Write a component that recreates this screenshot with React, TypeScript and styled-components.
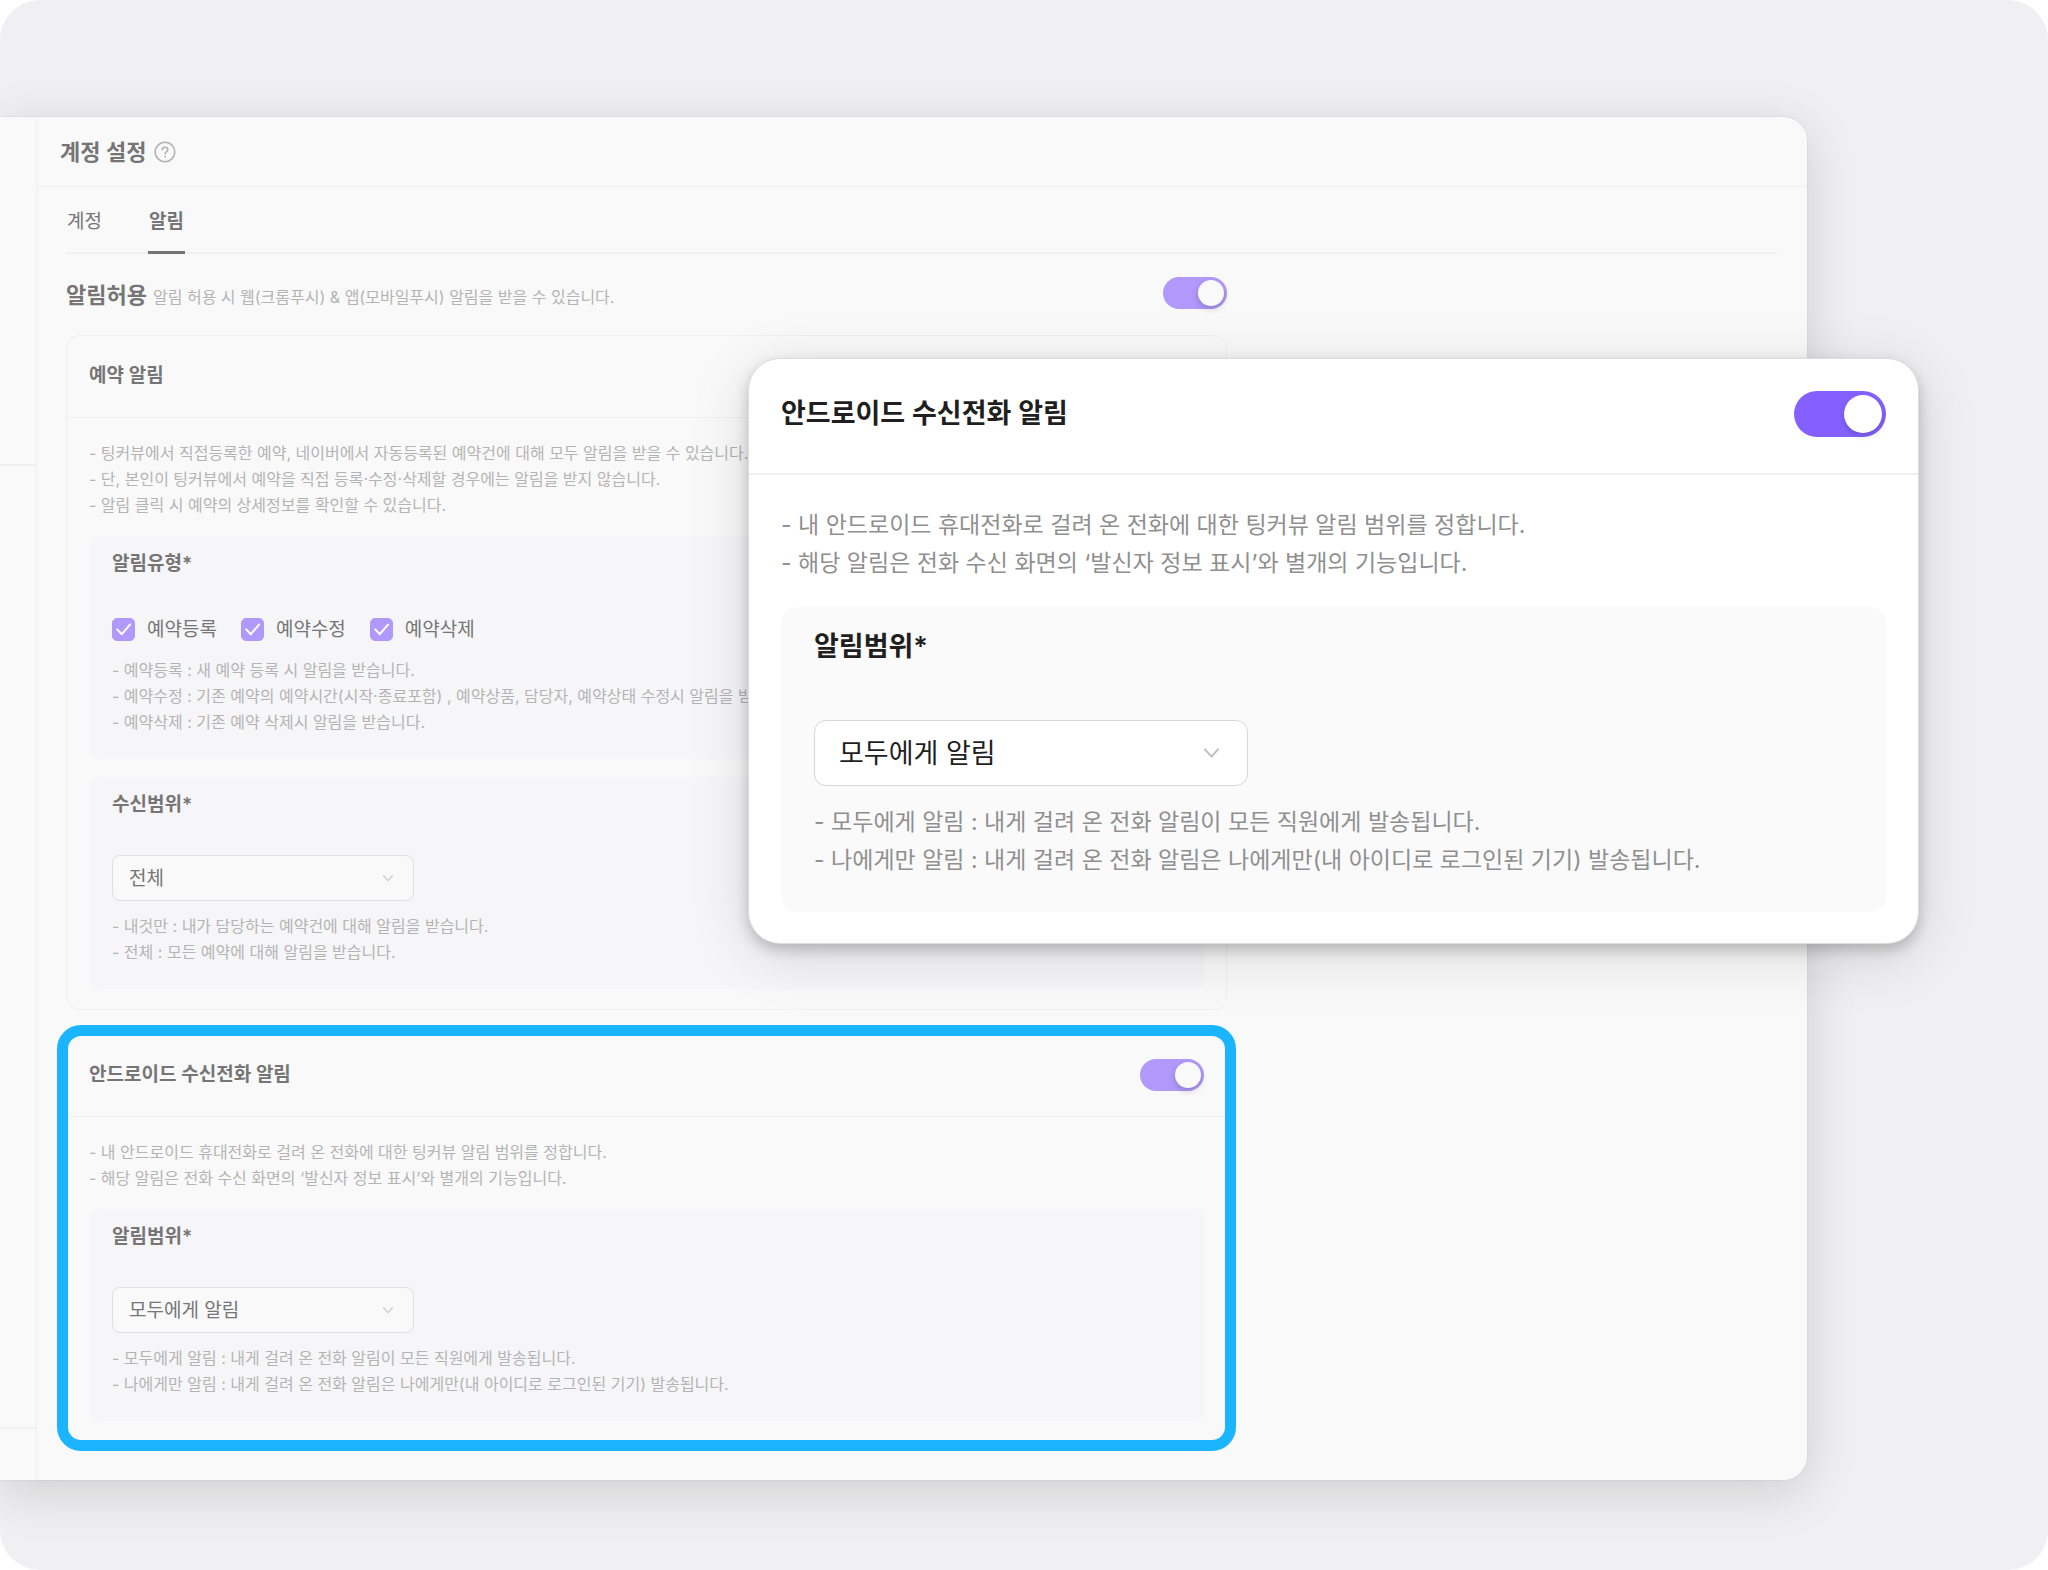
import React, { useState } from "react";
import styled, { createGlobalStyle, ThemeProvider, useTheme } from "styled-components";

const fontStack = `Inter, "Noto Sans CJK KR", "Noto Sans", sans-serif`;

/* Settings page: muted palette, regular scale */
const mutedTheme = {
  text: "#757575",
  hint: "#b4b4b4",
  line: "#f0f0f1",
  fieldLine: "#e0e0e1",
  chevron: "#cfcfcf",
  surface: "#f9f9f9",
  box: "#f6f6f8",
  accent: "#b198fb",
  titleSize: 19,
  hintSize: 16,
  hintLine: 26,
  gutter: 22,
  headHeight: 80,
  headLift: 1,
  rule: 1,
  bodyTop: 22,
  bodyBottom: 20,
  hintGap: 18,
  boxTop: 15,
  boxSide: 23,
  boxBottom: 24,
  boxRadius: 10,
  controlGap: 37,
  controlHintGap: 12,
  fieldWidth: 302,
  fieldHeight: 46,
  fieldPad: 16,
  fieldRadius: 8,
  chevronSize: 12,
  chevronRight: 20,
  switchWidth: 64,
  switchHeight: 32,
  knob: 26,
  knobInset: 3,
};

type Tokens = typeof mutedTheme;

/* Floating card: full-contrast palette, large scale */
const vividTheme: Tokens = {
  text: "#1f1f1f",
  hint: "#8f8f8f",
  line: "#f0f0f0",
  fieldLine: "#d6d6d6",
  chevron: "#bfbfbf",
  surface: "#ffffff",
  box: "#fafafa",
  accent: "#8560ff",
  titleSize: 27,
  hintSize: 23,
  hintLine: 38,
  gutter: 32,
  headHeight: 110,
  headLift: 4,
  rule: 2,
  bodyTop: 31,
  bodyBottom: 31,
  hintGap: 25,
  boxTop: 21,
  boxSide: 33,
  boxBottom: 33,
  boxRadius: 16,
  controlGap: 54,
  controlHintGap: 17,
  fieldWidth: 434,
  fieldHeight: 66,
  fieldPad: 24,
  fieldRadius: 12,
  chevronSize: 17,
  chevronRight: 28,
  switchWidth: 92,
  switchHeight: 46,
  knob: 38,
  knobInset: 4,
};

declare module "styled-components" {
  export interface DefaultTheme extends Tokens {}
}

const GlobalStyle = createGlobalStyle`
  *, *::before, *::after { box-sizing: border-box; }
  body { margin: 0; background: #ffffff; font-family: ${fontStack}; }
  h1, h2, h3, p, ul, fieldset { margin: 0; padding: 0; }
  button, input, select { font: inherit; color: inherit; margin: 0; }
`;

const Stage = styled.main`
  position: relative;
  min-height: 100vh;
  padding: 117px 241px 90px 0;
  overflow: hidden;
  border-radius: 40px;
  background: #f0f0f2;
`;

const Panel = styled.div`
  display: flex;
  overflow: hidden;
  border-radius: 0 24px 24px 0;
  background: ${(p) => p.theme.surface};
  color: ${(p) => p.theme.text};
`;

const PanelShadow = styled.div`
  border-radius: 0 24px 24px 0;
  box-shadow: 0 0 2px rgba(0, 0, 0, 0.14), 0 12px 52px rgba(0, 0, 0, 0.14);
`;

const Rail = styled.aside`
  display: flex;
  flex-direction: column;
  flex: none;
  width: 37px;
  border-right: 1px solid ${(p) => p.theme.line};
`;

const RailSection = styled.div<{ $height?: number }>`
  flex: ${(p) => (p.$height ? "none" : 1)};
  height: ${(p) => (p.$height ? `${p.$height}px` : "auto")};
  border-bottom: 2px solid ${(p) => p.theme.line};

  &:last-child { border-bottom: 0; }
`;

const Page = styled.div`
  flex: 1;
  min-width: 0;
`;

const PageHeader = styled.header`
  display: flex;
  align-items: center;
  gap: 7px;
  height: 70px;
  padding: 0 23px;
  border-bottom: 1px solid ${(p) => p.theme.line};
`;

const PageTitle = styled.h1`
  font-size: 22px;
  line-height: 32px;
  font-weight: 600;
`;

const HelpButton = styled.button`
  display: grid;
  place-items: center;
  padding: 0;
  border: 0;
  background: none;
  color: #b4b4b4;
`;

const PageContent = styled.div`
  padding: 0 29px 38px;
`;

const TabList = styled.div`
  display: flex;
  gap: 45px;
  height: 67px;
  box-shadow: inset 0 -2px ${(p) => p.theme.line};
`;

const Tab = styled.button<{ $active: boolean }>`
  padding: 0 1px;
  border: 0;
  border-bottom: 3px solid ${(p) => (p.$active ? p.theme.text : "transparent")};
  background: none;
  font-size: 19px;
  font-weight: ${(p) => (p.$active ? 600 : 400)};
`;

const AllowRow = styled.div`
  display: flex;
  align-items: center;
  justify-content: space-between;
  padding: 23px 0 26px;
`;

const AllowText = styled.div`
  display: flex;
  align-items: baseline;
  gap: 6px;
  padding-top: 6px;
  line-height: 24px;
`;

const AllowTitle = styled.h2`
  font-size: 22px;
  font-weight: 600;
`;

const AllowHint = styled.p`
  font-size: 16px;
  color: ${(p) => p.theme.hint};
`;

const Settings = styled.div`
  max-width: 1161px;
`;

const CardStack = styled.div`
  display: flex;
  flex-direction: column;
  gap: 24px;
`;

const Card = styled.section<{ $highlighted?: boolean }>`
  position: relative;
  border: 1px solid ${(p) => p.theme.line};
  border-radius: 14px;
  background: ${(p) => p.theme.surface};
  color: ${(p) => p.theme.text};

  &::after {
    content: ${(p) => (p.$highlighted ? '""' : "none")};
    position: absolute;
    inset: -10px;
    border: 11px solid #1bb5ff;
    border-radius: 24px;
    pointer-events: none;
  }
`;

const FloatingCard = styled(Card)`
  position: absolute;
  top: 358px;
  right: 129px;
  width: 1171px;
  border-color: #dcdcdc;
  border-radius: 32px;
  box-shadow: 0 6px 14px rgba(0, 0, 0, 0.2), 0 12px 60px rgba(0, 0, 0, 0.13);
`;

const CardHead = styled.header`
  display: flex;
  align-items: center;
  justify-content: space-between;
  box-sizing: content-box;
  height: ${(p) => p.theme.headHeight}px;
  padding: 0 ${(p) => p.theme.gutter}px ${(p) => p.theme.headLift}px;
  border-bottom: ${(p) => p.theme.rule}px solid ${(p) => p.theme.line};
`;

const CardTitle = styled.h2`
  font-size: ${(p) => p.theme.titleSize}px;
  line-height: ${(p) => p.theme.hintLine}px;
  font-weight: 600;
`;

const CardBody = styled.div`
  display: flex;
  flex-direction: column;
  gap: ${(p) => p.theme.hintGap}px;
  padding: ${(p) => p.theme.bodyTop}px ${(p) => p.theme.gutter}px
    ${(p) => p.theme.bodyBottom}px;
`;

const HintList = styled.ul`
  list-style: none;
  font-size: ${(p) => p.theme.hintSize}px;
  line-height: ${(p) => p.theme.hintLine}px;
  color: ${(p) => p.theme.hint};
  white-space: nowrap;
`;

const Box = styled.fieldset`
  display: flex;
  flex-direction: column;
  min-width: 0;
  padding: ${(p) => p.theme.boxTop}px ${(p) => p.theme.boxSide}px
    ${(p) => p.theme.boxBottom}px;
  border: 0;
  border-radius: ${(p) => p.theme.boxRadius}px;
  background: ${(p) => p.theme.box};
`;

const BoxTitle = styled.h3`
  margin-bottom: ${(p) => p.theme.controlGap}px;
  font-size: ${(p) => p.theme.titleSize}px;
  line-height: ${(p) => p.theme.hintLine}px;
  font-weight: 600;
`;

const Control = styled.div`
  display: flex;
  align-items: center;
  gap: 24px;
  min-height: 31px;
  margin-bottom: ${(p) => p.theme.controlHintGap}px;
`;

const SwitchInput = styled.input`
  appearance: none;
  flex: none;
  display: flex;
  justify-content: flex-start;
  width: ${(p) => p.theme.switchWidth}px;
  height: ${(p) => p.theme.switchHeight}px;
  padding: ${(p) => p.theme.knobInset}px;
  align-items: center;
  border-radius: ${(p) => p.theme.switchHeight}px;
  background: #d0d0d4;

  &::before {
    content: "";
    width: ${(p) => p.theme.knob}px;
    height: ${(p) => p.theme.knob}px;
    border-radius: 50%;
    background: ${(p) => p.theme.surface};
    box-shadow: 0 3px 6px rgba(0, 35, 11, 0.2);
  }

  &:checked {
    justify-content: flex-end;
    background: ${(p) => p.theme.accent};
  }
`;

const CheckLabel = styled.label`
  display: flex;
  align-items: center;
  gap: 12px;
  font-size: 19px;
  line-height: 30px;
`;

const CheckMark = styled.span`
  display: grid;
  place-items: center;

  > * { grid-area: 1 / 1; }
  > svg { pointer-events: none; }
`;

const CheckInput = styled.input`
  appearance: none;
  width: 23px;
  height: 23px;
  border: 1px solid ${(p) => p.theme.fieldLine};
  border-radius: 5px;

  &:checked {
    border-color: ${(p) => p.theme.accent};
    background: ${(p) => p.theme.accent};
  }
`;

const SelectFrame = styled.div`
  position: relative;
  width: ${(p) => p.theme.fieldWidth}px;

  > svg {
    position: absolute;
    top: 50%;
    right: ${(p) => p.theme.chevronRight}px;
    transform: translateY(-50%);
    color: ${(p) => p.theme.chevron};
    pointer-events: none;
  }
`;

const SelectInput = styled.select`
  appearance: none;
  display: block;
  width: 100%;
  height: ${(p) => p.theme.fieldHeight}px;
  padding: 0 ${(p) => p.theme.fieldPad}px;
  border: 1px solid ${(p) => p.theme.fieldLine};
  border-radius: ${(p) => p.theme.fieldRadius}px;
  background: ${(p) => p.theme.surface};
  font-size: ${(p) => p.theme.titleSize}px;
`;

function Switch({ label }: { label: string }) {
  const [on, setOn] = useState(true);
  return (
    <SwitchInput
      type="checkbox"
      role="switch"
      aria-label={label}
      checked={on}
      onChange={() => setOn(!on)}
    />
  );
}

function Check({ label }: { label: string }) {
  return (
    <CheckLabel>
      <CheckMark>
        <CheckInput type="checkbox" defaultChecked />
        <svg width="23" height="23" viewBox="0 0 23 23" fill="none">
          <path d="M5.2 11.4 9.8 16.2 18 6.6" stroke="#fff" strokeWidth="2" strokeLinecap="round" strokeLinejoin="round" />
        </svg>
      </CheckMark>
      {label}
    </CheckLabel>
  );
}

function Select({ label, value, options }: { label: string; value: string; options: string[] }) {
  const { chevronSize } = useTheme() as Tokens;
  return (
    <SelectFrame>
      <SelectInput aria-label={label} defaultValue={value}>
        {options.map((option) => (
          <option key={option}>{option}</option>
        ))}
      </SelectInput>
      <svg width={chevronSize} height={chevronSize} viewBox="0 0 12 12" fill="none">
        <path d="M1.4 3.4 6 8.6 10.6 3.4" stroke="currentColor" strokeWidth="1.4" strokeLinecap="round" strokeLinejoin="round" />
      </svg>
    </SelectFrame>
  );
}

function Hints({ lines }: { lines: string[] }) {
  return (
    <HintList>
      {lines.map((line) => (
        <li key={line}>- {line}</li>
      ))}
    </HintList>
  );
}

function AndroidCallContent() {
  return (
    <>
      <CardHead>
        <CardTitle>안드로이드 수신전화 알림</CardTitle>
        <Switch label="안드로이드 수신전화 알림" />
      </CardHead>
      <CardBody>
        <Hints
          lines={[
            "내 안드로이드 휴대전화로 걸려 온 전화에 대한 팅커뷰 알림 범위를 정합니다.",
            "해당 알림은 전화 수신 화면의 ‘발신자 정보 표시’와 별개의 기능입니다.",
          ]}
        />
        <Box>
          <BoxTitle>알림범위*</BoxTitle>
          <Control>
            <Select label="알림범위" value="모두에게 알림" options={["모두에게 알림", "나에게만 알림"]} />
          </Control>
          <Hints
            lines={[
              "모두에게 알림 : 내게 걸려 온 전화 알림이 모든 직원에게 발송됩니다.",
              "나에게만 알림 : 내게 걸려 온 전화 알림은 나에게만(내 아이디로 로그인된 기기) 발송됩니다.",
            ]}
          />
        </Box>
      </CardBody>
    </>
  );
}

function ReservationCard() {
  return (
    <Card>
      <CardHead>
        <CardTitle>예약 알림</CardTitle>
        <Switch label="예약 알림" />
      </CardHead>
      <CardBody>
        <Hints
          lines={[
            "팅커뷰에서 직접등록한 예약, 네이버에서 자동등록된 예약건에 대해 모두 알림을 받을 수 있습니다.",
            "단, 본인이 팅커뷰에서 예약을 직접 등록·수정·삭제할 경우에는 알림을 받지 않습니다.",
            "알림 클릭 시 예약의 상세정보를 확인할 수 있습니다.",
          ]}
        />
        <Box>
          <BoxTitle>알림유형*</BoxTitle>
          <Control>
            <Check label="예약등록" />
            <Check label="예약수정" />
            <Check label="예약삭제" />
          </Control>
          <Hints
            lines={[
              "예약등록 : 새 예약 등록 시 알림을 받습니다.",
              "예약수정 : 기존 예약의 예약시간(시작·종료포함) , 예약상품, 담당자, 예약상태 수정시 알림을 받습니다.",
              "예약삭제 : 기존 예약 삭제시 알림을 받습니다.",
            ]}
          />
        </Box>
        <Box>
          <BoxTitle>수신범위*</BoxTitle>
          <Control>
            <Select label="수신범위" value="전체" options={["전체", "내것만"]} />
          </Control>
          <Hints
            lines={[
              "내것만 : 내가 담당하는 예약건에 대해 알림을 받습니다.",
              "전체 : 모든 예약에 대해 알림을 받습니다.",
            ]}
          />
        </Box>
      </CardBody>
    </Card>
  );
}

export default function App() {
  const [tab, setTab] = useState("알림");
  return (
    <>
      <GlobalStyle />
      <Stage lang="ko">
        <ThemeProvider theme={mutedTheme}>
          <PanelShadow>
            <Panel>
              <Rail>
                <RailSection $height={349} />
                <RailSection />
                <RailSection $height={51} />
              </Rail>
              <Page>
                <PageHeader>
                  <PageTitle>계정 설정</PageTitle>
                  <HelpButton aria-label="도움말">
                    <svg width="22" height="22" viewBox="0 0 22 22" fill="none" stroke="currentColor" strokeWidth="1.6" strokeLinecap="round">
                      <circle cx="11" cy="11" r="9.8" />
                      <path d="M8.2 8.7C8.2 7.2 9.4 6.2 11 6.2s2.8 1 2.8 2.5c0 2-2.8 2.2-2.8 4.2" />
                      <circle cx="11" cy="15.8" r="0.5" fill="currentColor" strokeWidth="0.8" />
                    </svg>
                  </HelpButton>
                </PageHeader>
                <PageContent>
                  <TabList role="tablist">
                    {["계정", "알림"].map((name) => (
                      <Tab key={name} role="tab" aria-selected={tab === name} $active={tab === name} onClick={() => setTab(name)}>
                        {name}
                      </Tab>
                    ))}
                  </TabList>
                  <Settings>
                    <AllowRow>
                      <AllowText>
                        <AllowTitle>알림허용</AllowTitle>
                        <AllowHint>알림 허용 시 웹(크롬푸시) &amp; 앱(모바일푸시) 알림을 받을 수 있습니다.</AllowHint>
                      </AllowText>
                      <Switch label="알림허용" />
                    </AllowRow>
                    <CardStack>
                      <ReservationCard />
                      <Card $highlighted>
                        <AndroidCallContent />
                      </Card>
                    </CardStack>
                  </Settings>
                </PageContent>
              </Page>
            </Panel>
          </PanelShadow>
        </ThemeProvider>
        <ThemeProvider theme={vividTheme}>
          <FloatingCard>
            <AndroidCallContent />
          </FloatingCard>
        </ThemeProvider>
      </Stage>
    </>
  );
}
